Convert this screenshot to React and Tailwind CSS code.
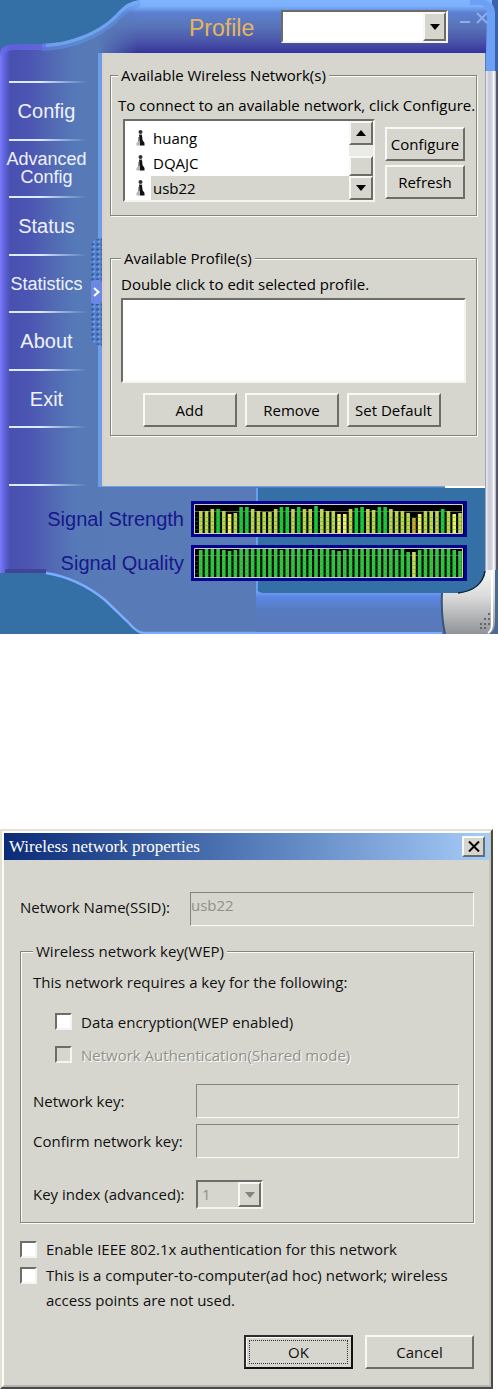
import React, { useState } from 'react';
import clsx from 'clsx';

const FONT = 'font-["Open_Sans","Noto_Sans",sans-serif]';
const RAISED = 'border-2 border-t-[#f8f8f4] border-l-[#f8f8f4] border-r-[#6c6c68] border-b-[#6c6c68] bg-[#d6d6ce]';
const SUNKEN = 'border-2 border-t-[#6c6c68] border-l-[#6c6c68] border-r-[#f4f4f0] border-b-[#f4f4f0]';
const THIN_SUNKEN = 'border border-t-[#84847e] border-l-[#84847e] border-r-[#fbfbf8] border-b-[#fbfbf8]';

const navItems = [
  { name: 'Config', size: 'text-[20px]' },
  { name: 'Advanced Config', size: 'text-[18px]' },
  { name: 'Status', size: 'text-[20px]' },
  { name: 'Statistics', size: 'text-[18px]' },
  { name: 'About', size: 'text-[20px]' },
  { name: 'Exit', size: 'text-[20px]' }
];

const networks = ['huang', 'DQAJC', 'usb22'];

const strength = [
  22, 22, 24, 24, 22, 19, 20, 26, 26, 24, 22, 21, 21, 24, 26, 26, 24, 26, 24, 24, 27, 24, 22,
  22, 19, 19, 24, 25, 26, 24, 23, 26, 26, 24, 22, 22, 20, 15, 19, 22, 22, 22, 24, 22, 19, 20
];
const strengthGreen = [3, 7, 8, 14, 15, 17, 20, 27, 28, 31, 32, 42];

const quality = [
  27, 28, 28, 28, 27, 26, 27, 28, 28, 28, 28, 28, 28, 28, 27, 28, 28, 28, 28, 27, 28, 28, 28,
  27, 26, 27, 28, 28, 28, 28, 28, 28, 28, 28, 27, 28, 25, 25, 27, 28, 28, 28, 28, 28, 27, 26
];

const strengthColor = (value, i) => {
  if (strengthGreen.includes(i)) return '#1fc83c';
  if (value < 17) return '#d0a638';
  if (value < 20) return '#f4ec64';
  return '#c0d454';
};
const qualityColor = (value, i) => (i === 37 ? '#c8dc5c' : '#34c642');

const Arrow = ({ up, color = '#000' }) => (
  <svg width="10" height="6" viewBox="0 0 10 6" aria-hidden="true">
    <path d={up ? 'M0 6L5 0L10 6Z' : 'M0 0L5 6L10 0Z'} fill={color} />
  </svg>
);

const StationIcon = () => (
  <svg width="9" height="16" viewBox="0 0 9 16" aria-hidden="true">
    <circle cx="4.5" cy="2" r="2" fill="#333" />
    <path d="M3 5h3l.5 5L8.500 13v2.500H4z" fill="#111" />
    <path d="M3 5v5L.5 13v2.500h3.500z" fill="#b4b4b0" />
    <path d="M3 5h3M3 7v4" stroke="#333" />
  </svg>
);

const PushButton = ({ children, className }) => (
  <button type="button" className={clsx(RAISED, 'text-center', className)}>
    {children}
  </button>
);

const GroupBox = ({ title, children, className }) => (
  <fieldset
    className={clsx(
      'min-w-0 border border-[#84847e] shadow-[1px_1px_0_#fbfbf8,inset_1px_1px_0_#fbfbf8]',
      className
    )}
  >
    <legend className="h-5 bg-[#d6d6ce] px-[3px] leading-5">{title}</legend>
    {children}
  </fieldset>
);

const SignalChart = ({ label, values, colorOf }) => (
  <svg
    className="h-9 w-full border-[3px] border-[#05058c] bg-black"
    viewBox="0 0 270 30"
    preserveAspectRatio="none"
    role="img"
    aria-label={label}
  >
    <path d="M1 7.500H268" stroke="#5a5a5a" />
    {values.map((value, i) => (
      <rect key={i} x={5 + i * 5.76} y={29 - value} width="3.6" height={value} fill={colorOf(value, i)} />
    ))}
    <path d="M1 13.500H268M1 17.500H268M1 21.500H268M1 25.500H268" stroke="#0c9c18" strokeOpacity=".35" />
    <path d="M.5 30V.5H268.500V29.500H.5" fill="none" stroke="#d2c8d8" />
  </svg>
);

// Curved blue and silver body of the utility window
const Shell = () => (
  <svg
    className="absolute inset-0 h-full w-full"
    viewBox="0 0 498 634"
    preserveAspectRatio="none"
    aria-hidden="true"
  >
    <defs>
      <linearGradient id="side" gradientUnits="userSpaceOnUse" x1="0" y1="0" x2="102" y2="0">
        <stop offset="0" stopColor="#7a7af8" />
        <stop offset=".04" stopColor="#6264e0" />
        <stop offset=".1" stopColor="#4850b0" />
        <stop offset=".3" stopColor="#4c56b2" />
        <stop offset=".5" stopColor="#5268b4" />
        <stop offset=".75" stopColor="#567ab8" />
        <stop offset="1" stopColor="#587ab6" />
      </linearGradient>
      <linearGradient id="head" x1="0" y1="0" x2="0" y2="1">
        <stop offset="0" stopColor="#80b4ff" />
        <stop offset=".12" stopColor="#7cb0fc" />
        <stop offset=".24" stopColor="#5c80d0" />
        <stop offset=".5" stopColor="#5874b8" />
        <stop offset=".8" stopColor="#4a52a8" />
        <stop offset="1" stopColor="#34349a" />
      </linearGradient>
      <linearGradient id="headFade" x1="0" y1="0" x2="1" y2="0">
        <stop offset="0" stopColor="#fff" stopOpacity="0" />
        <stop offset="1" stopColor="#fff" />
      </linearGradient>
      <mask id="headMask">
        <rect x="98" y="0" width="40" height="53" fill="url(#headFade)" />
        <rect x="138" y="0" width="360" height="53" fill="#fff" />
      </mask>
      <linearGradient id="foot" x1="0" y1="0" x2="0" y2="1">
        <stop offset="0" stopColor="#84b0fc" />
        <stop offset=".2" stopColor="#5c86e4" />
        <stop offset=".5" stopColor="#567cc0" />
        <stop offset="1" stopColor="#5a78b8" />
      </linearGradient>
      <linearGradient id="frame" x1="0" y1="0" x2="1" y2="0">
        <stop offset="0" stopColor="#7c84a0" />
        <stop offset=".12" stopColor="#e8e8f0" />
        <stop offset=".3" stopColor="#c8c8d6" />
        <stop offset=".55" stopColor="#d4d4e0" />
        <stop offset=".65" stopColor="#fff" />
        <stop offset=".8" stopColor="#c8c8d8" />
        <stop offset=".88" stopColor="#5c5c70" />
        <stop offset="1" stopColor="#4c4c60" />
      </linearGradient>
      <linearGradient id="corner" x1="0" y1="0" x2="0" y2="1">
        <stop offset="0" stopColor="#f4f4f4" />
        <stop offset=".4" stopColor="#dcdcdc" />
        <stop offset="1" stopColor="#909498" />
      </linearGradient>
      <clipPath id="body">
        <path d="M0 54Q1 44 16 44H42C80 43 108 24 118 12Q128 1 140 0H498V634H143Q136 632 128 622L105 600Q78 578 48 573H0Z" />
      </clipPath>
    </defs>

    <rect width="498" height="634" fill="#346fa5" />
    <g clipPath="url(#body)">
      <rect width="498" height="634" fill="#587ab6" />
      <rect width="102" height="634" fill="url(#side)" />
      <rect x="98" width="400" height="53" fill="url(#head)" mask="url(#headMask)" />
      <path d="M42 45C80 44 108 25 118 13Q128 2 140 1" fill="none" stroke="#6098e8" strokeWidth="12" strokeOpacity=".5" />
      <path d="M42 45C80 44 108 25 118 13Q128 2 140 1" fill="none" stroke="#78acfc" strokeWidth="5" strokeOpacity=".7" />
      <path d="M0 55Q2 46 16 46H46" fill="none" stroke="#6868e8" strokeWidth="8" strokeOpacity=".7" />
      <path d="M5 572H46" stroke="#40408e" strokeWidth="6" strokeOpacity=".8" />
    </g>
    <path d="M46 573Q78 578 105 600L128 622Q136 632 143 633H442" fill="none" stroke="#7cacff" strokeWidth="2.500" />

    {/* lower bay */}
    <path d="M256 488H485V568Q482 590 458 593H256Z" fill="#346fa5" />
    <path d="M256 588Q258 593 264 593H445V632H256Z" fill="url(#foot)" />
    <path d="M257 488V590" stroke="#6c9cec" strokeWidth="2" />
    <path d="M100 53V485H446" fill="none" stroke="#6a9ee8" strokeWidth="4" />
    <path d="M445 486H486" stroke="#fff" strokeWidth="4" />

    {/* silver frame */}
    <rect x="492" y="0" width="6" height="72" fill="#3a62a8" />
    <path d="M486 53V71H495V12Q494 3 486 0H470V5H482Q487 8 487 14Z" fill="#6ca0f4" />
    <rect x="485" y="71" width="13" height="504" fill="url(#frame)" />
    <path d="M442 593H460Q482 590 486 570H498V634H445Q441 616 442 593Z" fill="url(#corner)" />
    <path d="M442 593Q441 616 445 634" fill="none" stroke="#3c5478" strokeWidth="2" />
    <path d="M458 593Q482 590 485 571" fill="none" stroke="#0c2438" strokeWidth="1.500" />
    <path d="M492 570V624Q492 631 488 633" fill="none" stroke="#fff" strokeWidth="2" />
    <path d="M495 570H498V634H489Q495 631 495 622Z" fill="#4a6a90" />
    <path
      d="M488 614h2M484 619h2M488 619h2M480 624h2M484 624h2M488 624h2M480 628h2M484 628h2"
      stroke="#666"
      strokeWidth="2"
    />
  </svg>
);

const Handle = () => (
  <svg className="absolute top-[185px] right-0" width="11" height="108" viewBox="0 0 11 108" aria-hidden="true">
    <defs>
      <pattern id="grip" width="5" height="5" patternUnits="userSpaceOnUse">
        <circle cx="1.500" cy="1.500" r="1.300" fill="#34589c" />
        <circle cx="3" cy="3.500" r="1.100" fill="#78a4ec" />
      </pattern>
    </defs>
    <path d="M11 0Q1 1 0 8V100Q1 106 11 108Z" fill="#5480c8" />
    <path d="M11 0Q1 1 0 8V100Q1 106 11 108Z" fill="url(#grip)" />
    <rect x="0" y="42" width="11" height="24" rx="4" fill="#6c88e4" />
    <path d="M3 50L7.500 54L3 58" fill="none" stroke="#fff" strokeWidth="2" />
  </svg>
);

const Divider = () => (
  <div className="h-0.5 w-[78px] bg-linear-to-r from-[#dcecff] from-40% to-[#5878b8]/10" />
);

const Sidebar = ({ active, onSelect }) => (
  <nav className="relative flex flex-col pt-7 pr-[11px] pl-[9px]">
    {navItems.map((item) => (
      <div key={item.name} className="flex flex-1 flex-col">
        <Divider />
        <button
          type="button"
          aria-current={active === item.name}
          onClick={() => onSelect(item.name)}
          className={clsx('-ml-1 w-[83px] flex-1 text-center leading-[18px] text-[#eef2ff]', item.size)}
        >
          {item.name}
        </button>
      </div>
    ))}
    <div className="flex-1">
      <Divider />
    </div>
    <Divider />
    <Handle />
  </nav>
);

const NetworkList = () => {
  const [selected, setSelected] = useState('usb22');

  return (
    <div className={clsx(SUNKEN, 'flex h-[83px] flex-1 bg-white')}>
      <ul role="listbox" aria-label="Available Wireless Network(s)" className="flex-1 py-1 pl-[11px]">
        {networks.map((name) => (
          <li
            key={name}
            role="option"
            aria-selected={selected === name}
            onClick={() => setSelected(name)}
            className="flex h-[25px] items-center"
          >
            <StationIcon />
            <span
              className={clsx(
                'ml-[6px] flex-1 pl-0.5 leading-6',
                selected === name && 'bg-[#d6d6ce]'
              )}
            >
              {name}
            </span>
          </li>
        ))}
      </ul>
      <div className="flex w-6 flex-col bg-[#eaeae6]">
        <button type="button" aria-label="Scroll up" className={clsx(RAISED, 'flex h-6 items-center justify-center')}>
          <Arrow up />
        </button>
        <div className="flex-1" />
        <div className={clsx(RAISED, 'h-5')} />
        <button type="button" aria-label="Scroll down" className={clsx(RAISED, 'flex h-6 items-center justify-center')}>
          <Arrow />
        </button>
      </div>
    </div>
  );
};

const UtilityWindow = () => {
  const [active, setActive] = useState('Profile');

  return (
    <section className='relative font-["Liberation_Sans",Arial,sans-serif]'>
      <Shell />
      <div className="relative">
        {/* Header */}
        <header className="flex h-[53px] items-start pl-[189px]">
          <h1 className="w-[92px] pt-3 text-[23px] leading-8 text-[#e8b45c]">Profile</h1>
          <div className="relative mt-[10px] flex-1">
            <select
              aria-label="Profile"
              className={clsx(SUNKEN, 'block h-[33px] w-full appearance-none bg-white')}
            />
            <span className={clsx(RAISED, 'pointer-events-none absolute top-0.5 right-0.5 flex h-[29px] w-[23px] items-center justify-center')}>
              <Arrow />
            </span>
          </div>
          <div className="flex w-[50px] items-center gap-[6px] pt-[11px] pl-3">
            <button type="button" aria-label="Minimize">
              <svg width="10" height="14" viewBox="0 0 10 14">
                <path d="M0 11H10" stroke="#8cacec" strokeWidth="2" />
              </svg>
            </button>
            <button type="button" aria-label="Close">
              <svg width="12" height="14" viewBox="0 0 12 14">
                <path d="M1 2L11 12M11 2L1 12" stroke="#8cacec" strokeWidth="2" />
              </svg>
            </button>
          </div>
        </header>

        <div className="grid grid-cols-[102px_minmax(0,1fr)_13px]">
          <Sidebar active={active} onSelect={setActive} />

          <main className={clsx(FONT, 'border-l-2 border-[#dccfc8] bg-[#d6d6ce] pt-3 pr-2 pb-[50px] pl-[6px] text-[15px]')}>
            <GroupBox title="Available Wireless Network(s)" className="px-[7px] pb-[13px]">
              <p className="mt-[10px] leading-5 whitespace-nowrap">
                To connect to an available network, click Configure.
              </p>
              <div className="mt-1 flex gap-[10px] pr-1 pl-[5px]">
                <NetworkList />
                <div className="flex w-20 flex-col gap-1 pt-2">
                  <PushButton className="h-[34px]">Configure</PushButton>
                  <PushButton className="h-[34px]">Refresh</PushButton>
                </div>
              </div>
            </GroupBox>

            <GroupBox title="Available Profile(s)" className="mt-8 px-[10px] pb-2">
              <p className="mt-[6px] leading-5">Double click to edit selected profile.</p>
              <ul
                role="listbox"
                aria-label="Available Profile(s)"
                className={clsx(SUNKEN, 'mt-1 h-[85px] bg-white')}
              />
              <div className="mt-[10px] flex justify-center gap-2 pr-1">
                <PushButton className="h-[34px] w-[94px]">Add</PushButton>
                <PushButton className="h-[34px] w-[94px]">Remove</PushButton>
                <PushButton className="h-[34px] w-[94px]">Set Default</PushButton>
              </div>
            </GroupBox>
          </main>
        </div>

        {/* Signal meters */}
        <footer className="grid grid-cols-[184px_1fr] items-center gap-x-[7px] gap-y-2 pt-[15px] pr-[31px] pb-[53px] text-right text-[20px] text-[#17178c]">
          <span>Signal Strength</span>
          <SignalChart label="Signal Strength" values={strength} colorOf={strengthColor} />
          <span>Signal Quality</span>
          <SignalChart label="Signal Quality" values={quality} colorOf={qualityColor} />
        </footer>
      </div>
    </section>
  );
};

const CheckBox = ({ id, label, disabled, className, boxClassName }) => (
  <div className={clsx('flex items-start gap-[9px]', className)}>
    <input
      id={id}
      type="checkbox"
      disabled={disabled}
      className={clsx(
        SUNKEN,
        'size-[17px] shrink-0 appearance-none checked:bg-[#404040]',
        disabled ? 'bg-[#d6d6ce]' : 'bg-white',
        boxClassName
      )}
    />
    <label
      htmlFor={id}
      className={clsx(disabled && 'text-[#90908a] [text-shadow:1px_1px_0_#fff]')}
    >
      {label}
    </label>
  </div>
);

const PropertiesDialog = () => (
  <section
    role="dialog"
    aria-labelledby="dialog-title"
    className={clsx(
      FONT,
      'mr-[5px] border-2 border-t-[#e6e0d2] border-r-[#4a4a48] border-b-[#4a4a48] border-l-[#e6e0d2] bg-[#d6d6ce] text-[15px] text-[#111]'
    )}
  >
    <div className="border-2 border-t-[#fbfbf8] border-r-[#c4c4be] border-b-[#b4b4b0] border-l-[#fbfbf8]">
      <div className="flex h-[27px] items-center justify-between bg-linear-to-r from-[#0c2a78] to-[#a6ccf8] pr-1 pl-[5px]">
        <h2 id="dialog-title" className='font-["Liberation_Serif",serif] text-[17px] text-white'>
          Wireless network properties
        </h2>
        <button type="button" aria-label="Close" className={clsx(RAISED, 'flex h-[21px] w-[23px] items-center justify-center')}>
          <svg width="12" height="11" viewBox="0 0 12 11">
            <path d="M1 .5L11 10.500M11 .5L1 10.500" stroke="#000" strokeWidth="2" />
          </svg>
        </button>
      </div>

      <form className="pt-8 pr-[15px] pb-4 pl-4" onSubmit={(e) => e.preventDefault()}>
        <div className="grid grid-cols-[170px_1fr] items-center">
          <label htmlFor="ssid" className="pb-1">Network Name(SSID):</label>
          <input
            id="ssid"
            disabled
            defaultValue="usb22"
            className={clsx(THIN_SUNKEN, 'h-[34px] w-full pb-2 text-[#90908a]')}
          />
        </div>

        <GroupBox title="Wireless network key(WEP)" className="mt-[15px] px-3 pb-[13px]">
          <p className="mt-[11px] leading-5">This network requires a key for the following:</p>
          <CheckBox
            id="wep"
            label="Data encryption(WEP enabled)"
            className="mt-5 pl-[22px] leading-5"
            boxClassName="mt-px"
          />
          <CheckBox
            id="shared"
            disabled
            label="Network Authentication(Shared mode)"
            className="mt-[13px] pl-[22px] leading-5"
            boxClassName="mt-px"
          />
          <div className="mt-[19px] grid grid-cols-[163px_1fr] items-center gap-y-[6px] pr-[2px]">
            <label htmlFor="key">Network key:</label>
            <input id="key" disabled className={clsx(THIN_SUNKEN, 'h-[34px] w-full')} />
            <label htmlFor="confirm">Confirm network key:</label>
            <input id="confirm" disabled className={clsx(THIN_SUNKEN, 'h-[34px] w-full')} />
          </div>
          <div className="mt-[22px] grid grid-cols-[163px_1fr] items-center">
            <label htmlFor="index" className="whitespace-nowrap">Key index (advanced):</label>
            <div className="relative w-[67px]">
              <select
                id="index"
                disabled
                className={clsx(SUNKEN, 'block h-[29px] w-full appearance-none pl-1 text-[#90908a] opacity-100')}
              >
                <option>1</option>
              </select>
              <span className={clsx(RAISED, 'pointer-events-none absolute top-0.5 right-0.5 flex h-[25px] w-[23px] items-center justify-center')}>
                <Arrow color="#84847e" />
              </span>
            </div>
          </div>
        </GroupBox>

        <CheckBox
          id="ieee"
          label="Enable IEEE 802.1x authentication for this network"
          className="mt-[14px] leading-[25px]"
          boxClassName="mt-1"
        />
        <CheckBox
          id="adhoc"
          label="This is a computer-to-computer(ad hoc) network; wireless access points are not used."
          className="mt-px leading-[25px]"
          boxClassName="mt-1"
        />

        <div className="mt-[22px] flex justify-end gap-3">
          <button
            type="submit"
            className="h-[34px] w-[109px] border-2 border-[#2c2c2c] border-r-[#111] border-b-[#111] bg-[#d6d6ce] p-[3px] shadow-[inset_1px_1px_0_#fff]"
          >
            <span className="flex h-full items-center justify-center border border-dotted border-[#333]">OK</span>
          </button>
          <PushButton className="h-[34px] w-[109px]">Cancel</PushButton>
        </div>
      </form>
    </div>
  </section>
);

const App = () => {
  return (
    <div className="flex flex-col gap-[195px] bg-white">
      <UtilityWindow />
      <PropertiesDialog />
    </div>
  );
};

export default App;
